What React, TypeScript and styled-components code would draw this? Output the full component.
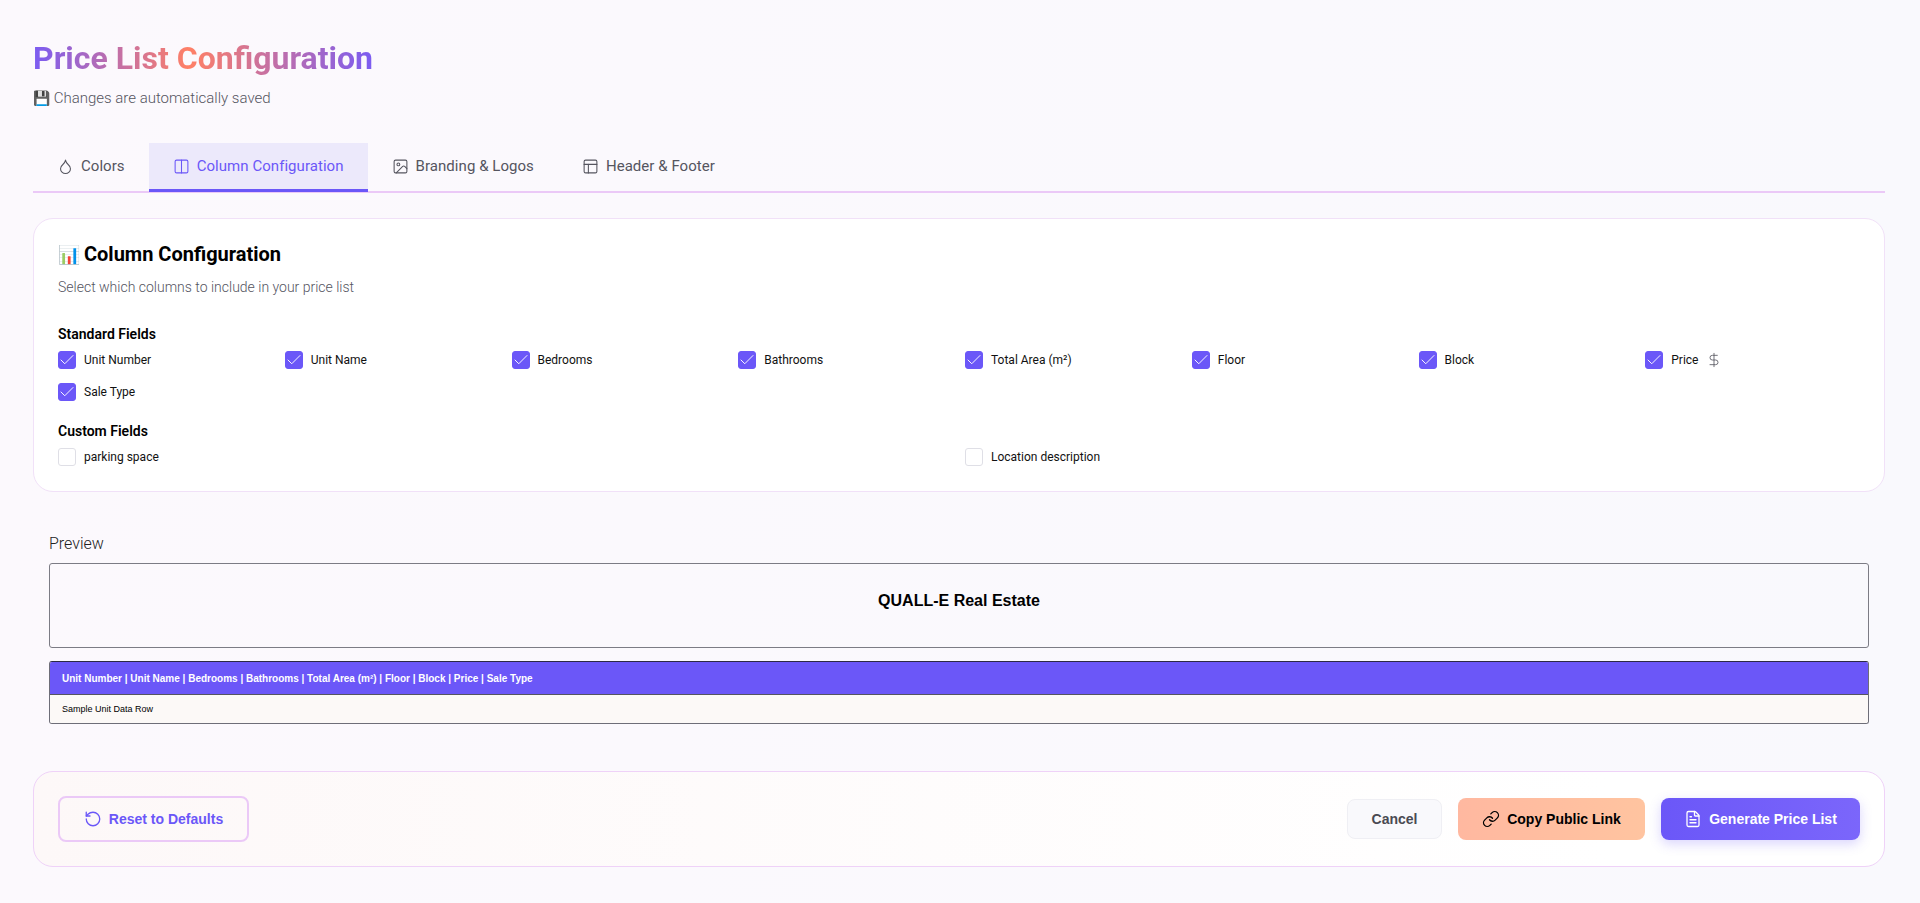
import React from 'react';
import styled, { createGlobalStyle } from 'styled-components';
import {
  Check,
  Columns2,
  DollarSign,
  Droplet,
  FileText,
  Image,
  Link,
  PanelsTopLeft,
  RotateCcw,
} from 'lucide-react';

const GlobalStyle = createGlobalStyle`
  html, body {
    margin: 0;
    padding: 0;
  }
  body {
    background: linear-gradient(90deg, #fcf9fd 0%, #f9f9fd 100%);
    font-family: 'Roboto', 'Noto Sans', sans-serif;
  }
  * {
    box-sizing: border-box;
  }
`;

const Page = styled.div`
  height: 903px;
  padding: 38px 35px 0 33px;
  overflow: hidden;
`;

const Title = styled.h1`
  display: inline-block;
  margin: 0;
  font-size: 32px;
  line-height: 40px;
  font-weight: 700;
  background: linear-gradient(90deg, #7b5cf2 0%, #ff8066 46%, #7b5cf2 100%);
  -webkit-background-clip: text;
  background-clip: text;
  color: transparent;
`;

const Subtitle = styled.p`
  margin: 10px 0 0;
  font-size: 15px;
  line-height: 20px;
  font-weight: 300;
  color: #55555f;
`;

const SubtitleEmoji = styled.span`
  font-size: 14px;
`;

const TabBar = styled.div`
  display: flex;
  margin-top: 35px;
  height: 50px;
  border-bottom: 2px solid #ebc9f7;
`;

const Tab = styled.button<{ $active?: boolean }>`
  display: flex;
  align-items: center;
  gap: 7px;
  height: 49px;
  padding: 0 24px;
  border: 0;
  border-bottom: 3px solid ${(p) => (p.$active ? '#6b57f8' : 'transparent')};
  background: ${(p) => (p.$active ? '#ece9fb' : 'transparent')};
  color: ${(p) => (p.$active ? '#6b57f8' : '#55555f')};
  font-family: inherit;
  font-size: 15px;
  font-weight: 400;
  letter-spacing: 0.05px;
`;

const Card = styled.section`
  margin-top: 25px;
  height: 274px;
  padding: 23px 24px;
  border: 1px solid #f1e1f8;
  border-radius: 20px;
  background: #ffffff;
`;

const CardTitle = styled.h2`
  margin: 0;
  font-size: 20px;
  line-height: 24px;
  font-weight: 700;
  color: #000000;
`;

const TitleEmoji = styled.span`
  margin-right: -1px;
  font-size: 18px;
`;

const CardHint = styled.p`
  margin: 10px 0 0;
  font-size: 14px;
  line-height: 20px;
  font-weight: 300;
  color: #55555f;
`;

const GroupLabel = styled.h3<{ $first?: boolean }>`
  margin: ${(p) => (p.$first ? '27px' : '20px')} 0 0;
  font-size: 14px;
  line-height: 20px;
  font-weight: 600;
  color: #000000;
`;

const FieldGrid = styled.div<{ $columns: number }>`
  display: grid;
  grid-template-columns: repeat(${(p) => p.$columns}, 1fr);
  gap: 14px 12px;
  margin-top: 7px;
`;

const Field = styled.label`
  display: flex;
  align-items: center;
  gap: 8px;
  height: 18px;
  font-size: 12px;
  color: #111111;
`;

const Box = styled.span<{ $checked?: boolean }>`
  display: flex;
  align-items: center;
  justify-content: center;
  width: 18px;
  height: 18px;
  border-radius: 3px;
  border: 1px solid ${(p) => (p.$checked ? '#6b57f8' : '#dfdfe6')};
  background: ${(p) => (p.$checked ? '#6b57f8' : '#ffffff')};
  color: #ffffff;

  svg {
    flex: none;
  }
`;

const PriceIcon = styled.span`
  display: flex;
  color: #55555f;
`;

const PreviewSection = styled.section`
  padding: 0 16px;
  margin-top: 42px;
`;

const PreviewLabel = styled.div`
  font-size: 16px;
  line-height: 20px;
  font-weight: 300;
  color: #222222;
`;

const PreviewHeader = styled.div`
  display: flex;
  align-items: center;
  justify-content: center;
  margin-top: 9px;
  height: 85px;
  padding-bottom: 10px;
  border: 1px solid #7c7c85;
  border-radius: 3px;
  font-family: 'Liberation Sans', Arial, sans-serif;
  font-size: 16px;
  font-weight: 700;
  color: #000000;
`;

const PreviewTable = styled.div`
  margin-top: 13px;
  border: 1px solid #6e6e78;
  border-top-color: #2c2a44;
  border-radius: 3px;
  overflow: hidden;
  font-family: 'Liberation Sans', Arial, sans-serif;
`;

const TableHead = styled.div`
  display: flex;
  align-items: center;
  height: 33px;
  padding: 0 12px;
  background: #6b57f8;
  border-bottom: 1px solid #55555f;
  color: #ffffff;
  font-size: 10px;
  font-weight: 700;
`;

const TableRow = styled.div`
  display: flex;
  align-items: center;
  height: 28px;
  padding: 0 12px;
  background: #fcf9f7;
  color: #000000;
  font-size: 9px;
`;

const Footer = styled.footer`
  display: flex;
  align-items: center;
  justify-content: space-between;
  margin-top: 47px;
  height: 96px;
  padding: 0 24px;
  border: 1px solid #efd2f8;
  border-radius: 20px;
  background: linear-gradient(90deg, #fdf8f8 0%, #ffffff 85%);
`;

const Actions = styled.div`
  display: flex;
  align-items: center;
  gap: 16px;
`;

const Button = styled.button<{ $variant: 'outline' | 'ghost' | 'coral' | 'primary' }>`
  display: flex;
  align-items: center;
  justify-content: center;
  gap: 7px;
  font-family: 'Liberation Sans', Arial, sans-serif;
  font-size: 14px;
  font-weight: 700;
  border-radius: 8px;
  ${(p) =>
    p.$variant === 'outline' &&
    `
    width: 191px;
    height: 46px;
    border: 2px solid #ebc9f7;
    background: transparent;
    color: #6b57f8;
  `}
  ${(p) =>
    p.$variant === 'ghost' &&
    `
    width: 95px;
    height: 40px;
    border: 1px solid #efeff4;
    background: #f9f9fc;
    color: #4a4a52;
  `}
  ${(p) =>
    p.$variant === 'coral' &&
    `
    width: 187px;
    height: 42px;
    border: 0;
    background: linear-gradient(90deg, #ffb8a0 0%, #ffc4a0 100%);
    color: #000000;
  `}
  ${(p) =>
    p.$variant === 'primary' &&
    `
    width: 199px;
    height: 42px;
    border: 0;
    background: linear-gradient(90deg, #6b57f8 0%, #7b66fb 100%);
    color: #ffffff;
    box-shadow: 0 4px 12px rgba(107, 87, 248, 0.25);
  `}
`;

const standardFields = [
  'Unit Number',
  'Unit Name',
  'Bedrooms',
  'Bathrooms',
  'Total Area (m²)',
  'Floor',
  'Block',
  'Price',
  'Sale Type',
];

const customFields = ['parking space', 'Location description'];

const tabs = [
  { label: 'Colors', icon: Droplet },
  { label: 'Column Configuration', icon: Columns2, active: true },
  { label: 'Branding & Logos', icon: Image },
  { label: 'Header & Footer', icon: PanelsTopLeft },
];

const App: React.FC = () => {
  return (
    <Page>
      <GlobalStyle />
      <Title>Price List Configuration</Title>
      <Subtitle>
        <SubtitleEmoji>💾</SubtitleEmoji> Changes are automatically saved
      </Subtitle>

      <TabBar>
        {tabs.map(({ label, icon: Icon, active }) => (
          <Tab key={label} $active={active} type='button'>
            <Icon size={17} strokeWidth={1.5} />
            {label}
          </Tab>
        ))}
      </TabBar>

      <Card>
        <CardTitle>
          <TitleEmoji>📊</TitleEmoji> Column Configuration
        </CardTitle>
        <CardHint>Select which columns to include in your price list</CardHint>

        <GroupLabel $first>Standard Fields</GroupLabel>
        <FieldGrid $columns={8}>
          {standardFields.map((field) => (
            <Field key={field}>
              <Box $checked>
                <Check size={18} strokeWidth={1.25} />
              </Box>
              {field}
              {field === 'Price' && (
                <PriceIcon>
                  <DollarSign size={16} strokeWidth={1.25} />
                </PriceIcon>
              )}
            </Field>
          ))}
        </FieldGrid>

        <GroupLabel>Custom Fields</GroupLabel>
        <FieldGrid $columns={2}>
          {customFields.map((field) => (
            <Field key={field}>
              <Box />
              {field}
            </Field>
          ))}
        </FieldGrid>
      </Card>

      <PreviewSection>
        <PreviewLabel>Preview</PreviewLabel>
        <PreviewHeader>QUALL-E Real Estate</PreviewHeader>
        <PreviewTable>
          <TableHead>
            Unit Number | Unit Name | Bedrooms | Bathrooms | Total Area (m²) | Floor | Block |
            Price | Sale Type
          </TableHead>
          <TableRow>Sample Unit Data Row</TableRow>
        </PreviewTable>
      </PreviewSection>

      <Footer>
        <Button $variant='outline' type='button'>
          <RotateCcw size={18} strokeWidth={1.75} />
          Reset to Defaults
        </Button>
        <Actions>
          <Button $variant='ghost' type='button'>
            Cancel
          </Button>
          <Button $variant='coral' type='button'>
            <Link size={18} strokeWidth={1.75} />
            Copy Public Link
          </Button>
          <Button $variant='primary' type='button'>
            <FileText size={18} strokeWidth={1.75} />
            Generate Price List
          </Button>
        </Actions>
      </Footer>
    </Page>
  );
};

export default App;
